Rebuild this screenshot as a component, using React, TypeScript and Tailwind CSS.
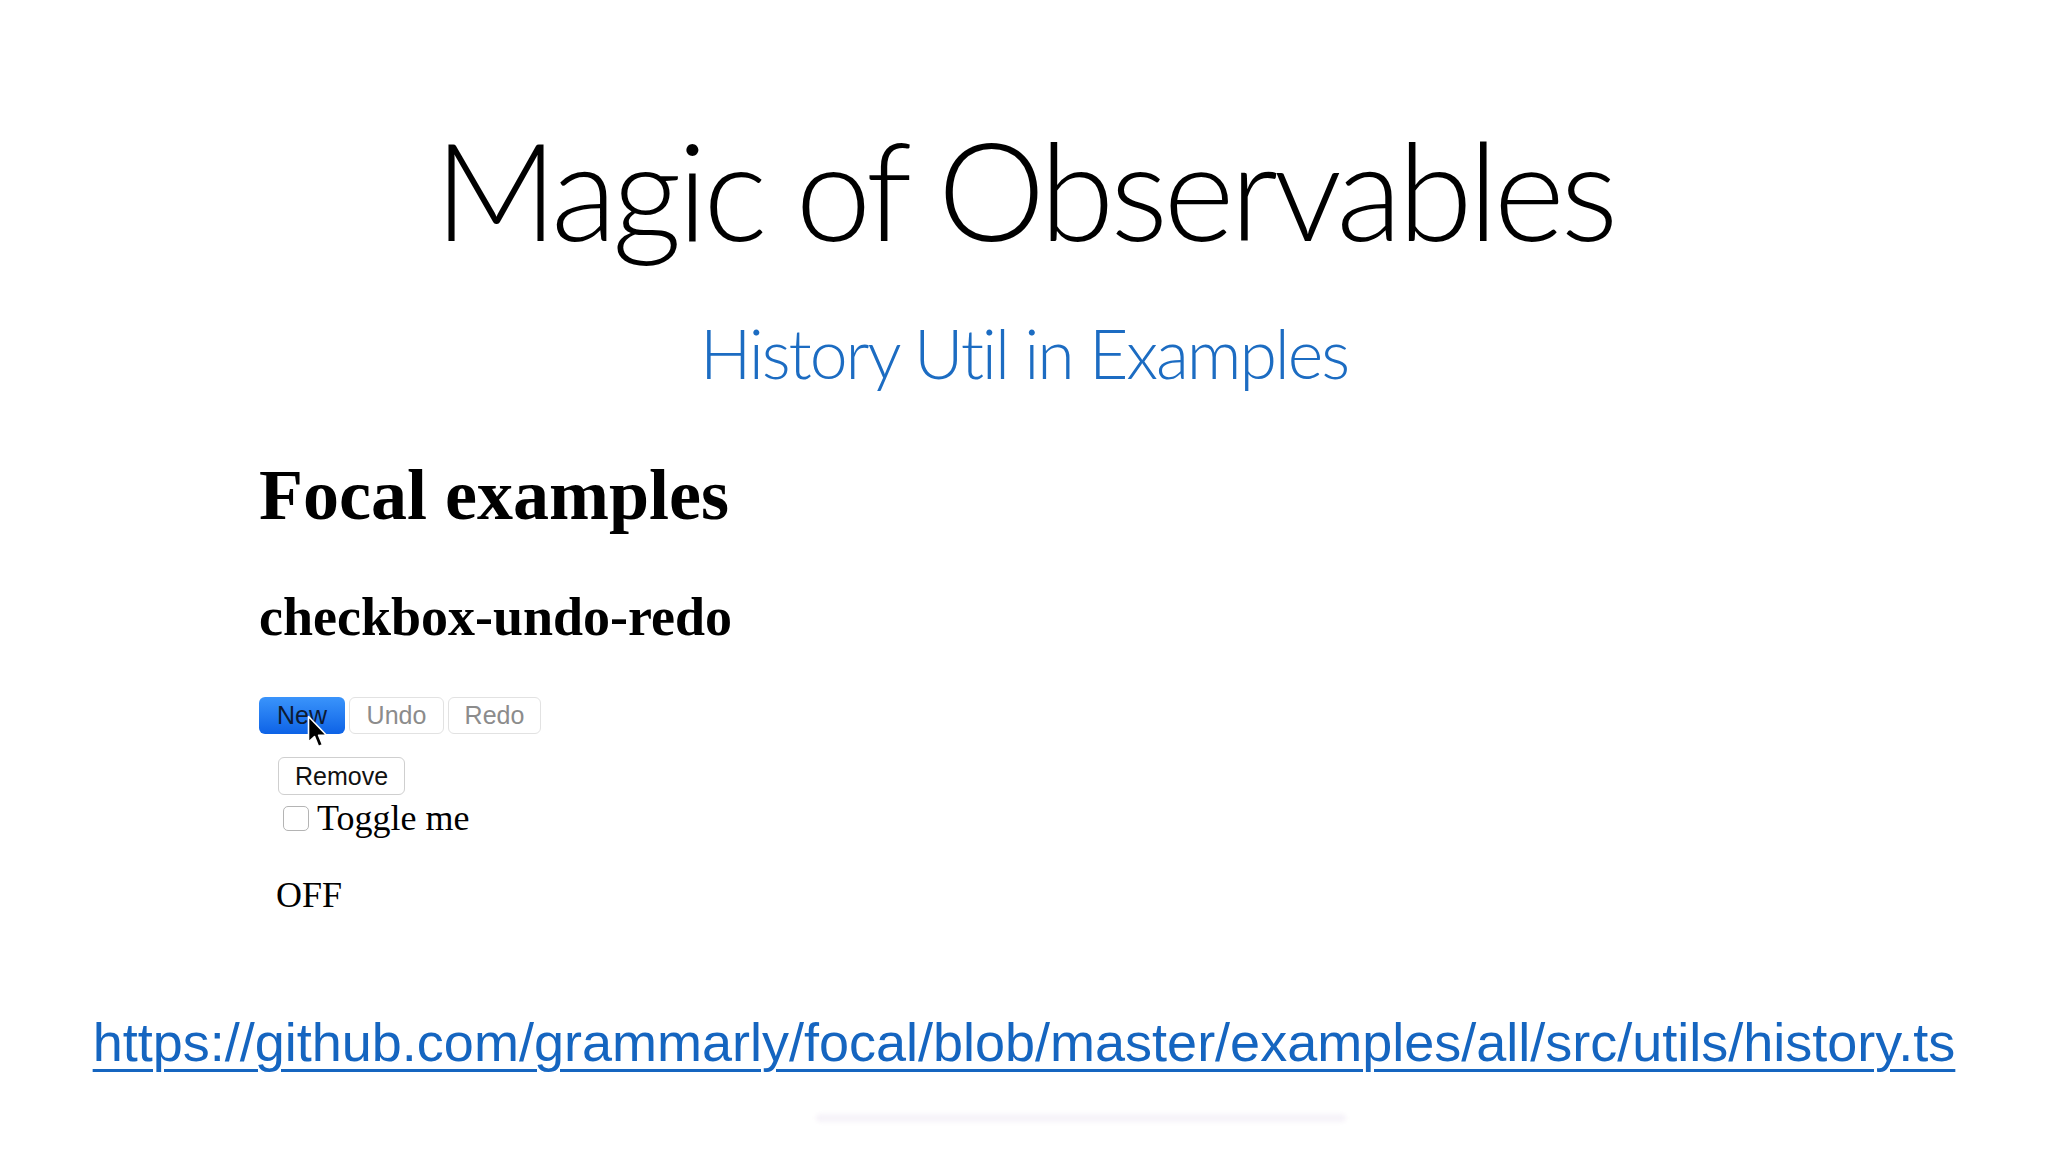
import React from 'react';

const Cursor = () => (
  <svg width="22" height="36" viewBox="0 0 22 36" className="absolute left-[48px] top-[18px]">
    <path
      d="M1.5 1.5 L1.5 27 L7.5 21.5 L11.5 31.5 L15.5 29.8 L11.6 20.2 L19.5 20.2 Z"
      fill="#000"
      stroke="#fff"
      strokeWidth="1.6"
      strokeLinejoin="round"
    />
  </svg>
);

export default function App() {
  return (
    <div className="w-[2048px] h-[1152px] bg-white overflow-hidden flex flex-col">
      {/* Slide title */}
      <h1 className="mt-[121px] text-center text-[136px] leading-none font-light text-black tracking-[-4.4px] font-['Lato',sans-serif]">
        Magic of Observables
      </h1>
      <p className="mt-[62px] text-center text-[68px] leading-none font-light text-[#1c6cc2] tracking-[-2.1px] font-['Lato',sans-serif]">
        History Util in Examples
      </p>

      {/* Embedded browser page */}
      <div className="pl-[259px] flex flex-col items-start font-['Liberation_Serif','Times_New_Roman',serif] text-black">
        <h2 className="mt-[72px] text-[72px] leading-none font-bold">Focal examples</h2>
        <h3 className="mt-[59px] text-[54px] leading-none font-bold">checkbox-undo-redo</h3>

        <div className="mt-[53px] flex gap-[4px] font-['Liberation_Sans',Arial,sans-serif] text-[25px] leading-none">
          <div className="relative">
            <button className="h-[37px] w-[86px] rounded-[6px] bg-gradient-to-b from-[#3a94fb] to-[#0d62e6] text-[#0d1a33] pb-[1px]">
              New
            </button>
            <Cursor />
          </div>
          <button className="h-[37px] w-[95px] rounded-[6px] bg-white border border-[#e2e2e2] text-[#8c8c8c]">
            Undo
          </button>
          <button className="h-[37px] w-[93px] rounded-[6px] bg-white border border-[#e2e2e2] text-[#8c8c8c]">
            Redo
          </button>
        </div>

        <button className="ml-[19px] mt-[23px] h-[38px] w-[127px] rounded-[6px] bg-white border border-[#cfcfcf] font-['Liberation_Sans',Arial,sans-serif] text-[25px] leading-none text-[#111]">
          Remove
        </button>

        <label className="ml-[24px] mt-[5px] flex items-center gap-[8px] text-[36px] leading-none">
          <span className="w-[26px] h-[25px] rounded-[5px] border border-[#b4b4b4] bg-white" />
          <span>Toggle me</span>
        </label>

        <div className="ml-[17px] mt-[41px] text-[36px] leading-none">OFF</div>
      </div>

      {/* Source link */}
      <a
        href="#"
        className="mt-[102px] text-center text-[54px] leading-none text-[#1565c0] underline underline-offset-[8px] decoration-[3px] font-['Liberation_Sans',Arial,sans-serif]"
      >
        https://github.com/grammarly/focal/blob/master/examples/all/src/utils/history.ts
      </a>

      <div className="mt-[45px] ml-[816px] w-[530px] h-[8px] rounded-full bg-[#f6f3f9] blur-[2px]" />
    </div>
  );
}
